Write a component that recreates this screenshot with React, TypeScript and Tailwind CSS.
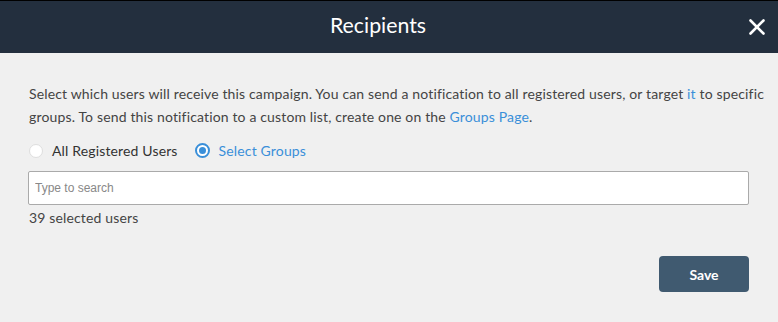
import { X } from "lucide-react";

export default function App() {
  return (
    <div className="w-[778px] h-[322px] bg-[#f0f0f0] font-['Lato',sans-serif] text-[#444]">
      {/* Header */}
      <div className="h-[53px] border-t border-black bg-[#232f3e] flex items-center justify-center relative pr-[22px]">
        <h1 className="text-[21.3px] text-white leading-none -mt-[2px]">Recipients</h1>
        <button className="absolute right-[8px] top-[13px] text-white">
          <X className="w-[26px] h-[26px]" strokeWidth={2.4} />
        </button>
      </div>

      {/* Body */}
      <div className="px-[29px] pt-[29px] text-[14px] tracking-[0.15px]">
        <p className="leading-[23px] whitespace-nowrap">
          Select which users will receive this campaign. You can send a notification to all registered users, or target{" "}
          <span className="text-[#3a8fd9]">it</span> to specific
          <br />
          groups. To send this notification to a custom list, create one on the{" "}
          <a className="text-[#3a8fd9]">Groups Page</a>.
        </p>

        <div className="flex items-center gap-[17px] mt-[12px]">
          <label className="flex items-center gap-[9px]">
            <span className="w-[14px] h-[14px] rounded-full bg-white border border-[#dedede]" />
            <span className="text-[#333]">All Registered Users</span>
          </label>
          <label className="flex items-center gap-[9px]">
            <span className="w-[15px] h-[15px] rounded-full border-[2px] border-[#3a8fd9] bg-white flex items-center justify-center">
              <span className="w-[7px] h-[7px] rounded-full bg-[#3a8fd9]" />
            </span>
            <span className="text-[#3a8fd9]">Select Groups</span>
          </label>
        </div>

        <input
          type="text"
          placeholder="Type to search"
          className="mt-[10px] -ml-[1px] w-[721px] h-[34px] bg-white border border-[#aaa] rounded-[2px] px-[6px] text-[12px] tracking-normal font-['Liberation_Sans',sans-serif] placeholder:text-[#888] outline-none"
        />
        <div className="mt-[2px]">39 selected users</div>

        <div className="flex justify-end mt-[28px]">
          <button className="w-[90px] h-[36px] rounded-[4px] bg-[#405a70] text-white font-bold tracking-normal">
            Save
          </button>
        </div>
      </div>
    </div>
  );
}
